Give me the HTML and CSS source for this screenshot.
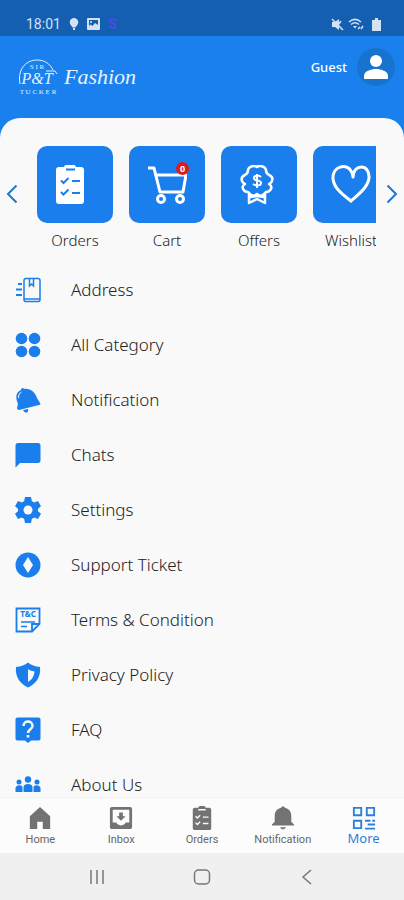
FILE: index.html
```
<!DOCTYPE html>
<html lang="en">

<head>
    <meta charset="UTF-8">
    <meta name="viewport" content="width=device-width, initial-scale=1.0">
    <title>Fashion - More</title>
    <link rel="stylesheet" href="styles.css">
</head>

<body>
    <div class="status-bar">
        <span class="clock">18:01</span>
        <svg width="10" height="14" viewBox="0 0 10 14" fill="#d3e2f5">
            <path d="M5 1a4.300 4.300 0 0 0-4.300 4.300C.7 8 3 9 3.600 10.500h2.800C7 9 9.300 8 9.300 5.300A4.300 4.300 0 0 0 5 1zM4 11h2v2H4z" />
        </svg>
        <svg width="13" height="12" viewBox="0 0 13 12">
            <rect width="13" height="12" rx="1" fill="#d3e2f5" />
            <path d="M2 2h9v5L8 5 5.500 8 3.500 6.500 2 8z" fill="#145fb2" />
            <circle cx="4" cy="4" r="1" fill="#d3e2f5" />
        </svg>
        <span class="status-app">S</span>
        <svg class="status-right" width="13" height="13" viewBox="0 0 13 13">
            <path d="M1 4h3l4-3v11L4 9H1z" fill="#d3e2f5" />
            <path d="M1 1l11 11M10 3L8 6" stroke="#d3e2f5" stroke-width="1.500" />
        </svg>
        <svg width="16" height="13" viewBox="0 0 16 13" fill="none" stroke="#d3e2f5" stroke-width="1.500">
            <path d="M1 4c4-3.500 8-3.500 12 0M3 6.500c3-2.500 5-2.500 8 0" />
            <path d="M5 8h4l-2 2.500z" fill="#d3e2f5" stroke="none" />
            <path d="M10 11l2-2M13 11l2-3" />
        </svg>
        <svg class="battery" width="9" height="13" viewBox="0 0 9 13" fill="#d3e2f5">
            <path d="M3 0h3v2h3v11H0V2h3z" />
        </svg>
    </div>

    <header class="header">
        <a class="logo" href="#" aria-label="Sir P&amp;T Tucker Fashion">
            <svg width="40" height="36" viewBox="0 0 40 36" fill="#e8f2fe">
                <path d="M2 25C-1 8 10 1 19 1c8 0 13 4 16 10" fill="none" stroke="#e8f2fe" />
                <path d="M28 12h9l2 3" fill="none" stroke="#e8f2fe" />
                <text class="logo-small" x="19" y="10" text-anchor="middle">S I R</text>
                <text class="logo-mono" x="19" y="25" text-anchor="middle">P&amp;T</text>
                <text class="logo-small" x="20" y="35" text-anchor="middle">T U C K E R</text>
            </svg>
            <span class="logo-name">Fashion</span>
        </a>
        <div class="account">
            <span>Guest</span>
            <button class="avatar" type="button" aria-label="Account">
                <svg width="26" height="26" viewBox="0 0 26 26" fill="#fff">
                    <circle cx="13" cy="7" r="6" />
                    <path d="M1 25v-3c0-5 7-7 12-7s12 2 12 7v3z" />
                </svg>
            </button>
        </div>
    </header>

    <main class="sheet">
        <section class="shortcuts">
            <button class="arrow" type="button" aria-label="Previous">
                <svg width="12" height="20" viewBox="0 0 12 20"><path d="M10.500 1.500L2 10l8.500 8.500" /></svg>
            </button>
            <div class="tiles">
                <a class="tile" href="#">
                    <span class="tile-box">
                        <svg width="40" height="40" viewBox="0 0 40 40">
                            <path d="M4 2h5c0-1 1-2 2-2h8c1 0 2 1 2 2h5c2 0 3 1 3 3v31c0 2-1 3-3 3H4c-2 0-3-1-3-3V5c0-2 1-3 3-3z" fill="#fff" />
                            <path d="M11 4.500h9M6 15.500l2.500 2.500 5-5M6 27l2.500 2.500 5-5M17 16h8M17 28h8" fill="none" stroke="#1a7eec" stroke-width="2" />
                        </svg>
                    </span>
                    Orders
                </a>
                <a class="tile" href="#">
                    <span class="tile-box">
                        <svg width="40" height="40" viewBox="0 0 40 40" fill="none" stroke="#fff" stroke-width="3">
                            <path d="M1 3h6l6 24h23l3-17H9" stroke-linejoin="round" />
                            <circle cx="14" cy="34" r="3.500" />
                            <circle cx="33" cy="34" r="3.500" />
                        </svg>
                        <span class="badge">0</span>
                    </span>
                    Cart
                </a>
                <a class="tile" href="#">
                    <span class="tile-box">
                        <svg width="40" height="40" viewBox="2 0 40 40">
                            <path d="M20 2c2-2 8-1 9 3 0 3 1 4 3 5 5 2 4 7 0 9 5 3 1 8-3 8-3 5-7 4-9 2-2 2-6 3-9-2-4 0-8-5-3-8-4-2-5-7 0-9 2-1 3-2 3-5 1-4 7-5 9-3zM12 27v11l8-4 8 4V27M13 32l7-1 7 1" fill="none" stroke="#fff" stroke-width="2.500" stroke-linejoin="round" />
                            <path d="M24 12c-2-2-7-2-7 1 0 4 7 1 7 5 0 3-5 3-8 1M20 9v14" fill="none" stroke="#fff" stroke-width="2" />
                        </svg>
                    </span>
                    Offers
                </a>
                <a class="tile" href="#">
                    <span class="tile-box">
                        <svg width="40" height="40" viewBox="0 0 40 40" fill="none" stroke="#fff" stroke-width="3" stroke-linecap="round">
                            <path d="M22 12C22-1 39-2 38 13c-1 9-10 16-18 23C11 29 3 23 2 14 1 1 16-2 20 6q2 3 2 6" />
                        </svg>
                    </span>
                    Wishlist
                </a>
            </div>
            <button class="arrow" type="button" aria-label="Next">
                <svg width="12" height="20" viewBox="0 0 12 20"><path d="M1.500 1.500L10 10l-8.500 8.500" /></svg>
            </button>
        </section>

        <nav class="menu">
            <a href="#">
                <svg viewBox="0 0 26 26" fill="none" stroke="#1a7eec" stroke-width="1.500">
                    <rect x="9" y="1.500" width="16" height="23" rx="2" />
                    <path d="M9 22h16" />
                    <path d="M14.500 2v7l2-2 2 2V2" />
                    <path d="M3 7h4M1 12.500h6M1 18h6" stroke-width="2" />
                </svg>
                Address
            </a>
            <a href="#">
                <svg viewBox="0 0 26 26">
                    <circle cx="6.500" cy="6.500" r="5.800" />
                    <circle cx="19.500" cy="6.500" r="5.800" />
                    <circle cx="6.500" cy="19.500" r="5.800" />
                    <circle cx="19.500" cy="19.500" r="5.800" />
                </svg>
                All Category
            </a>
            <a href="#">
                <svg viewBox="0 0 26 26">
                    <path d="M6 3c0-2 2-3 3-1 6-1 11 3 13 9l3 5c1 1 0 2-1 2L4 23c-1 0-2-1-2-2l1-4C0 10 1 5 6 3z" />
                    <path d="M8 23l5-1c1 4-3 5-5 1z" />
                    <path d="M3.500 11c0-3 1-5 3-6" fill="none" stroke="#f9f9f9" />
                </svg>
                Notification
            </a>
            <a href="#">
                <svg viewBox="0 0 26 26">
                    <path d="M3 1h20c1.500 0 2.500 1 2.500 2.500v15c0 1.500-1 2.500-2.500 2.500H5l-4.500 4.500v-22C.5 2 1.500 1 3 1z" />
                </svg>
                Chats
            </a>
            <a href="#">
                <svg viewBox="0 0 26 26">
                    <path d="M10 0h6l.8 4 2.400 1.400L23 4l3 5.200-3 2.600v2.400l3 2.600-3 5.200-3.800-1.400-2.400 1.400-.8 4h-6l-.8-4-2.400-1.400L3 22l-3-5.200 3-2.600v-2.400L0 9.200 3 4l3.800 1.400L9.200 4z" />
                    <circle cx="13" cy="13" r="4.500" fill="#f9f9f9" />
                </svg>
                Settings
            </a>
            <a href="#">
                <svg viewBox="0 0 26 26">
                    <circle cx="13" cy="13" r="12.500" />
                    <path d="M13 5l5 8-5 8-5-8z" fill="#f9f9f9" />
                </svg>
                Support Ticket
            </a>
            <a href="#">
                <svg viewBox="0 0 26 26">
                    <path d="M1.500 1.500h23V17L17 24.500H1.500zM24 17h-7v7" fill="none" stroke="#1a7eec" stroke-width="1.800" />
                    <path d="M6 15h14M6 19.500h6" stroke="#1a7eec" stroke-width="1.500" />
                    <text class="tc" x="13" y="10" text-anchor="middle">T&amp;C</text>
                </svg>
                Terms &amp; Condition
            </a>
            <a href="#">
                <svg viewBox="0 0 26 26">
                    <path d="M13 .5C10 3 6 4.500 1 5c-1 9 3 16 12 20.500C22 21 26 14 25 5c-5-.5-9-2-12-4.500z" />
                    <path d="M13 7c2 1.500 4 2 6.500 2.500-.5 5-2.500 8-6.500 10.500z" fill="#f9f9f9" />
                </svg>
                Privacy Policy
            </a>
            <a href="#">
                <svg viewBox="0 0 26 26">
                    <path d="M2.500.5h21c1.500 0 2 1 2 2v19c0 1-.5 2-2 2H16l-3 2.500-3-2.500H2.500c-1.500 0-2-1-2-2v-19c0-1 .5-2 2-2z" />
                    <path d="M8.500 9c0-6 9-6 9 0 0 3-4.500 3.500-4.500 7" fill="none" stroke="#f9f9f9" stroke-width="2.500" />
                    <path d="M11.700 18h2.600v2.600h-2.600z" fill="#f9f9f9" />
                </svg>
                FAQ
            </a>
            <a href="#">
                <svg viewBox="0 0 26 26">
                    <circle cx="13" cy="7.500" r="3.200" />
                    <circle cx="4" cy="10" r="2.500" />
                    <circle cx="22" cy="10" r="2.500" />
                    <path d="M8.500 20v-5c0-4 9-4 9 0v5zM.5 20v-4c0-3 6-4 7-1v5zM18.500 20v-5c1-3 7-2 7 1v4z" />
                </svg>
                About Us
            </a>
        </nav>
    </main>

    <nav class="tabs">
        <a href="#">
            <svg viewBox="0 0 26 26"><path d="M13 1L2 11v14h8v-8h6v8h8V11z" /></svg>
            Home
        </a>
        <a href="#">
            <svg viewBox="0 0 26 26">
                <path d="M3 1h20c1 0 2 1 2 2v20c0 1-1 2-2 2H3c-1 0-2-1-2-2V3c0-1 1-2 2-2zM4 4v14h4c1 4 9 4 10 0h4V4zM11 7h4v4h3l-5 5-5-5h3z" fill-rule="evenodd" />
            </svg>
            Inbox
        </a>
        <a href="#">
            <svg viewBox="0 0 26 26">
                <path d="M5 2h4c0-1 1-2 2-2h4c1 0 2 1 2 2h4c1 0 2 1 2 2v20c0 1-1 2-2 2H5c-1 0-2-1-2-2V4c0-1 1-2 2-2z" />
                <path d="M9 4h8M6 11l2 2 3-3M6 18l2 2 3-3M14 12h6M14 19h6" fill="none" stroke="#fcfcfc" stroke-width="1.500" />
            </svg>
            Orders
        </a>
        <a href="#">
            <svg viewBox="0 0 26 26"><path d="M11 2c0-2 4-2 4 0 5 1 7 5 7 9v6l3 3v1H1v-1l3-3v-6c0-4 2-8 7-9zM10 23h6c-1 3-5 3-6 0z" /></svg>
            Notification
        </a>
        <a class="active" href="#">
            <svg viewBox="0 0 26 26" fill="none" stroke="#2b7fd9" stroke-width="2">
                <path d="M2 2h8v8H2zM16 2h8v8h-8zM2 16h8v8H2zM14 16h6M17 20h8M14 24.500h11M22 16h3" />
            </svg>
            More
        </a>
    </nav>

    <div class="system-bar">
        <button type="button" aria-label="Recents">
            <svg width="18" height="18" viewBox="0 0 18 18"><path d="M3 2v14M9 2v14M15 2v14" /></svg>
        </button>
        <button type="button" aria-label="Home screen">
            <svg width="18" height="18" viewBox="0 0 18 18"><rect x="1.500" y="2" width="15" height="14" rx="4" /></svg>
        </button>
        <button type="button" aria-label="Back">
            <svg width="18" height="18" viewBox="0 0 18 18"><path d="M13 2L5 9l8 7" /></svg>
        </button>
    </div>
</body>

</html>
```
FILE: styles.css
```
* {
    box-sizing: border-box;
}

body {
    margin: 0;
    height: 100vh;
    display: flex;
    flex-direction: column;
    background: #1a80ee;
    color: #222;
    font-family: "Noto Sans", sans-serif;
}

a {
    color: inherit;
    text-decoration: none;
}

button {
    padding: 0;
    border: 0;
    background: none;
}

svg {
    display: block;
    flex: none;
}

.status-bar {
    display: flex;
    align-items: center;
    gap: 8px;
    height: 36px;
    padding: 12px 23px 0 26px;
    background: #145fb2;
    color: #d3e2f5;
    font-family: Roboto, sans-serif;
    font-size: 14px;
}

.status-app {
    color: #4b4be0;
    font-weight: bold;
}

.status-right {
    margin-left: auto;
}

.status-bar .status-right + svg {
    margin-left: -4px;
}

.header {
    display: flex;
    justify-content: space-between;
    height: 82px;
    padding: 9px 9px 0 18px;
}

.logo {
    display: flex;
    align-items: center;
    gap: 6px;
    height: 64px;
    color: #e8f2fe;
}

.logo-small {
    font: 7px "Liberation Serif", serif;
}

.logo-mono {
    font: italic 16px "Liberation Serif", serif;
}

.logo-name {
    font: italic 22px "Liberation Serif", serif;
}

.account {
    display: flex;
    align-items: center;
    gap: 10px;
    height: 44px;
    color: #fff;
    font-size: 13px;
    font-weight: 500;
}

.avatar {
    display: grid;
    place-items: center;
    width: 38px;
    height: 38px;
    border-radius: 50%;
    background: #1873cf;
}

.sheet {
    flex: 1;
    min-height: 0;
    overflow: hidden;
    border-radius: 20px 20px 0 0;
    background: #f9f9f9;
}

.shortcuts {
    display: flex;
    padding: 28px 4px 0 4px;
}

.arrow {
    display: grid;
    place-items: center;
    width: 16px;
    height: 96px;
}

.arrow path {
    fill: none;
    stroke: #1f76d2;
    stroke-width: 2;
}

.tiles {
    display: flex;
    flex: 1;
    gap: 16px;
    margin: 0 8px 0 17px;
    overflow: hidden;
}

.tile {
    flex: none;
    width: 76px;
    font-size: 15px;
    font-weight: 300;
    line-height: 20px;
    text-align: center;
}

.tile-box {
    position: relative;
    display: grid;
    place-items: center;
    height: 77px;
    margin-bottom: 7px;
    border-radius: 10px;
    background: #1a7eec;
}

.badge {
    position: absolute;
    top: 16px;
    right: 16px;
    width: 13px;
    border-radius: 50%;
    background: #d3201f;
    color: #fff;
    font-size: 9px;
    font-weight: bold;
    line-height: 13px;
}

.menu {
    padding-top: 12px;
}

.menu a {
    display: flex;
    align-items: center;
    gap: 30px;
    height: 55px;
    padding: 0 15px;
    font-size: 17px;
    font-weight: 300;
}

.menu svg {
    width: 26px;
    height: 26px;
    fill: #1a7eec;
}

.menu svg[fill="none"] {
    fill: none;
}

.tc {
    font: bold 8px "Noto Sans", sans-serif;
}

.tabs {
    display: flex;
    height: 56px;
    padding-top: 8px;
    border-top: 1px solid #f3f3f3;
    background: #fcfcfc;
    color: #666;
    font-family: Roboto, sans-serif;
    font-size: 11px;
    line-height: 16px;
}

.tabs a {
    display: flex;
    flex: 1;
    flex-direction: column;
    align-items: center;
    gap: 2px;
}

.tabs svg {
    width: 24px;
    height: 24px;
    fill: #737373;
}

.tabs .active {
    gap: 0;
    color: #2b7fd9;
    font-family: "Noto Sans", sans-serif;
    font-size: 13px;
}

.tabs .active svg {
    fill: none;
}

.system-bar {
    display: flex;
    justify-content: center;
    gap: 87px;
    height: 47px;
    background: #f0f0f0;
}

.system-bar svg {
    fill: none;
    stroke: #777;
    stroke-width: 1.500;
}
```
